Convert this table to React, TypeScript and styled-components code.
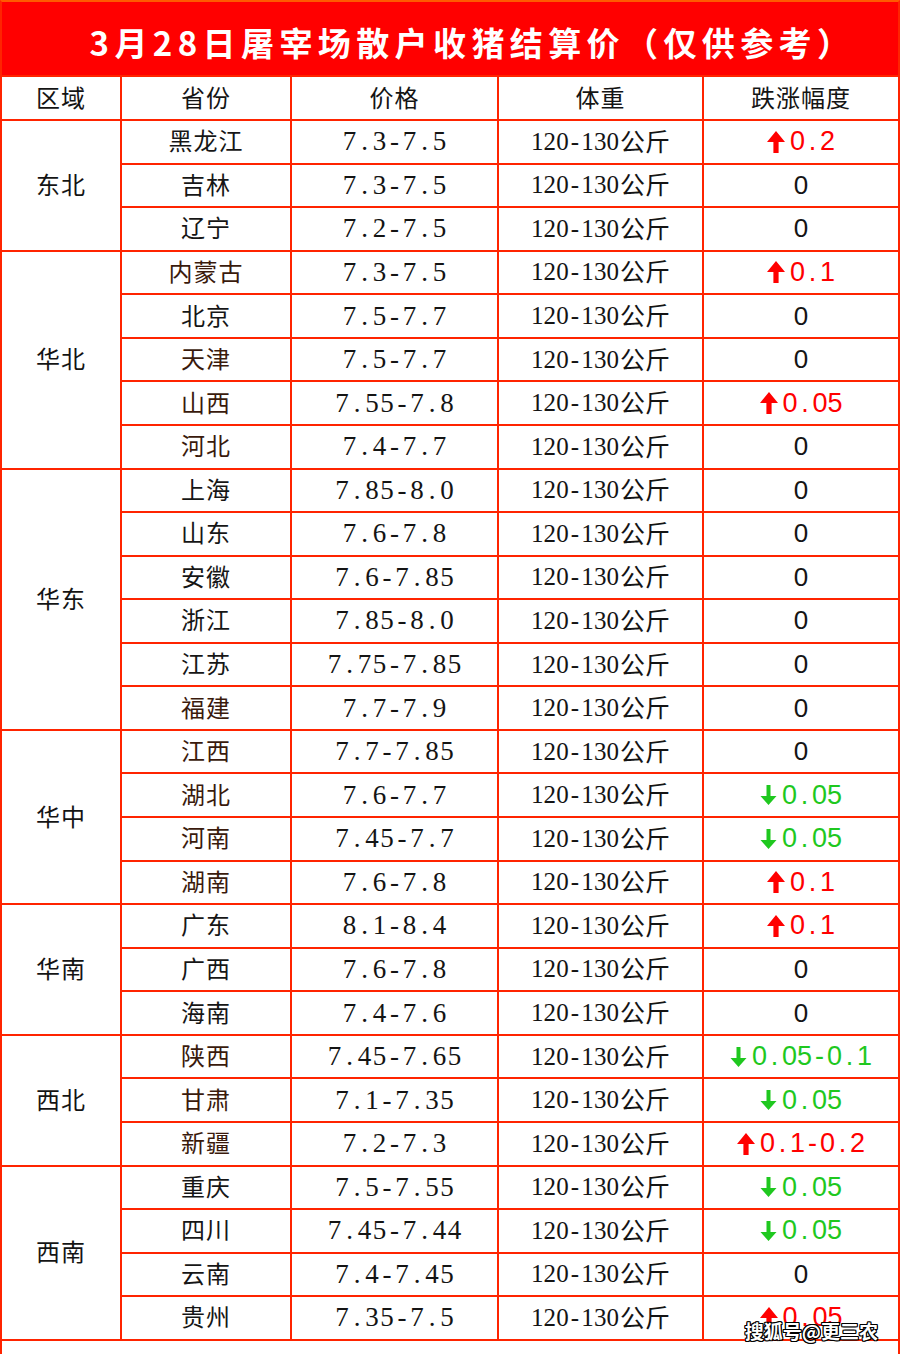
import React from "react";
import styled, { createGlobalStyle } from "styled-components";

const GlobalStyle = createGlobalStyle`
  html, body { margin: 0; padding: 0; background: #ffffff; }
  body { font-family: "Noto Sans CJK SC", "Noto Sans", sans-serif; }
`;

const LINE = "#ff2400";
const RED = "#ff0000";
const GREEN = "#1fc81f";

type Change = { dir: "up" | "down"; v: string } | null;
type Row = { name: string; price: string; change: Change; tint?: boolean };
type Group = { region: string; rows: Row[] };

const up = (v: string): Change => ({ dir: "up", v });
const down = (v: string): Change => ({ dir: "down", v });

const groups: Group[] = [
  {
    region: "东北",
    rows: [
      { name: "黑龙江", price: "7.3-7.5", change: up("0.2") },
      { name: "吉林", price: "7.3-7.5", change: null },
      { name: "辽宁", price: "7.2-7.5", change: null },
    ],
  },
  {
    region: "华北",
    rows: [
      { name: "内蒙古", price: "7.3-7.5", change: up("0.1"), tint: true },
      { name: "北京", price: "7.5-7.7", change: null },
      { name: "天津", price: "7.5-7.7", change: null, tint: true },
      { name: "山西", price: "7.55-7.8", change: up("0.05"), tint: true },
      { name: "河北", price: "7.4-7.7", change: null, tint: true },
    ],
  },
  {
    region: "华东",
    rows: [
      { name: "上海", price: "7.85-8.0", change: null },
      { name: "山东", price: "7.6-7.8", change: null },
      { name: "安徽", price: "7.6-7.85", change: null },
      { name: "浙江", price: "7.85-8.0", change: null },
      { name: "江苏", price: "7.75-7.85", change: null },
      { name: "福建", price: "7.7-7.9", change: null, tint: true },
    ],
  },
  {
    region: "华中",
    rows: [
      { name: "江西", price: "7.7-7.85", change: null, tint: true },
      { name: "湖北", price: "7.6-7.7", change: down("0.05"), tint: true },
      { name: "河南", price: "7.45-7.7", change: down("0.05"), tint: true },
      { name: "湖南", price: "7.6-7.8", change: up("0.1"), tint: true },
    ],
  },
  {
    region: "华南",
    rows: [
      { name: "广东", price: "8.1-8.4", change: up("0.1") },
      { name: "广西", price: "7.6-7.8", change: null },
      { name: "海南", price: "7.4-7.6", change: null },
    ],
  },
  {
    region: "西北",
    rows: [
      { name: "陕西", price: "7.45-7.65", change: down("0.05-0.1"), tint: true },
      { name: "甘肃", price: "7.1-7.35", change: down("0.05"), tint: true },
      { name: "新疆", price: "7.2-7.3", change: up("0.1-0.2"), tint: true },
    ],
  },
  {
    region: "西南",
    rows: [
      { name: "重庆", price: "7.5-7.55", change: down("0.05") },
      { name: "四川", price: "7.45-7.44", change: down("0.05") },
      { name: "云南", price: "7.4-7.45", change: null },
      { name: "贵州", price: "7.35-7.5", change: up("0.05") },
    ],
  },
];

const Frame = styled.div`
  position: relative;
  width: 900px;
  height: 1354px;
  box-sizing: border-box;
  border-left: 2px solid ${LINE};
  border-right: 2px solid ${LINE};
  border-top: 2px solid #ff5a00;
  background: #ffffff;
  overflow: hidden;
`;

const TitleBar = styled.div`
  height: 73px;
  box-sizing: border-box;
  padding: 6px 0 0 45px;
  background: ${RED};
  display: flex;
  align-items: center;
  justify-content: center;
  color: #ffffff;
  font-family: "Noto Sans CJK SC", sans-serif;
  font-weight: 700;
  font-size: 33px;
  letter-spacing: 5.4px;
  white-space: nowrap;
`;

const Board = styled.div`
  display: grid;
  grid-template-columns: 118px 168px 205px 203px 194px;
  grid-template-rows: 42px repeat(28, 41.57px);
  column-gap: 2px;
  row-gap: 2px;
  padding: 2px;
  margin: 0 -2px;
  background: ${LINE};
`;

const Cell = styled.div<{ $span?: number }>`
  background: #ffffff;
  display: flex;
  align-items: center;
  justify-content: center;
  white-space: nowrap;
  grid-row: ${(p) => (p.$span ? `span ${p.$span}` : "auto")};
  grid-column: ${(p) => (p.$span ? "1" : "auto")};
`;

const HeadText = styled.span`
  font-family: "Noto Sans CJK SC", sans-serif;
  font-size: 24px;
  color: #141414;
  letter-spacing: 1px;
  margin-bottom: 4px;
`;

const NameText = styled.span<{ $tint?: boolean }>`
  font-family: "Noto Sans CJK SC", sans-serif;
  font-size: 24px;
  color: ${(p) => (p.$tint ? "#3a1a0c" : "#161616")};
  letter-spacing: 1px;
  margin-bottom: 4px;
`;

const Mono = styled.span<{ $serif?: boolean; $color?: string; $size: number }>`
  display: inline-flex;
  align-items: center;
  font-family: ${(p) => (p.$serif ? '"Liberation Serif", serif' : '"Liberation Sans", sans-serif')};
  font-size: ${(p) => p.$size}px;
  color: ${(p) => p.$color || "#141414"};
`;

const Glyph = styled.span<{ $w: number }>`
  display: inline-block;
  width: ${(p) => p.$w}px;
  text-align: center;
`;

const UnitText = styled.span`
  font-family: "Noto Sans CJK SC", sans-serif;
  font-size: 25px;
  color: #141414;
  margin: 0 0 4px 1px;
`;

const ChangeBox = styled.span`
  display: inline-flex;
  align-items: center;
  gap: 5px;
`;

const Watermark = styled.div`
  position: absolute;
  right: 20px;
  bottom: 10px;
  font-family: "Noto Sans CJK SC", sans-serif;
  font-weight: 700;
  font-size: 19px;
  color: #ffffff;
  text-shadow: 1px 0 0 #000, -1px 0 0 #000, 0 1px 0 #000, 0 -1px 0 #000,
    1px 1px 0 #000, -1px -1px 0 #000, 1px -1px 0 #000, -1px 1px 0 #000;
`;

const Spaced: React.FC<{ text: string; w: number; size: number; serif?: boolean; color?: string }> = ({
  text,
  w,
  size,
  serif,
  color,
}) => (
  <Mono $serif={serif} $size={size} $color={color}>
    {text.split("").map((c, i) => (
      <Glyph key={i} $w={w}>
        {c}
      </Glyph>
    ))}
  </Mono>
);

const UpArrow = () => (
  <svg width="18" height="22" viewBox="0 0 18 22">
    <polygon points="9,0 18,11 11.6,11 11.6,22 6.4,22 6.4,11 0,11" fill={RED} />
  </svg>
);

const DownArrow = () => (
  <svg width="17" height="20" viewBox="0 0 17 20">
    <polygon points="6.5,0 10.5,0 10.5,11 16.5,11 8.5,20 0.5,11 6.5,11" fill={GREEN} />
  </svg>
);

const ChangeValue: React.FC<{ change: Change }> = ({ change }) => {
  if (!change) return <Spaced text="0" w={15} size={26} />;
  const color = change.dir === "up" ? RED : GREEN;
  return (
    <ChangeBox>
      {change.dir === "up" ? <UpArrow /> : <DownArrow />}
      <Spaced text={change.v} w={15} size={27} color={color} />
    </ChangeBox>
  );
};

export default function App() {
  return (
    <>
      <GlobalStyle />
      <Frame>
        <TitleBar>3月28日屠宰场散户收猪结算价（仅供参考）</TitleBar>
        <Board>
          {["区域", "省份", "价格", "体重", "跌涨幅度"].map((h) => (
            <Cell key={h}>
              <HeadText>{h}</HeadText>
            </Cell>
          ))}
          {groups.map((g) => (
            <React.Fragment key={g.region}>
              <Cell $span={g.rows.length}>
                <HeadText>{g.region}</HeadText>
              </Cell>
              {g.rows.map((r) => (
                <React.Fragment key={r.name}>
                  <Cell>
                    <NameText $tint={r.tint}>{r.name}</NameText>
                  </Cell>
                  <Cell>
                    <Spaced text={r.price} w={15} size={27} serif />
                  </Cell>
                  <Cell>
                    <Spaced text="120-130" w={12.6} size={25} serif />
                    <UnitText>公斤</UnitText>
                  </Cell>
                  <Cell>
                    <ChangeValue change={r.change} />
                  </Cell>
                </React.Fragment>
              ))}
            </React.Fragment>
          ))}
        </Board>
        <Watermark>搜狐号@更三农</Watermark>
      </Frame>
    </>
  );
}
